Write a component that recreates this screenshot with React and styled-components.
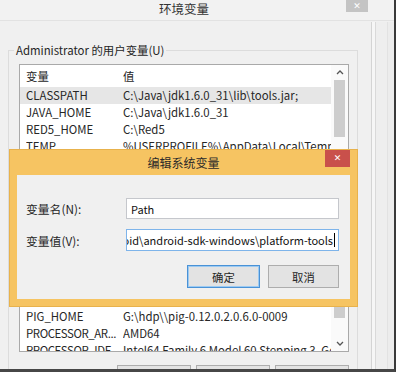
import React from 'react';
import styled, { createGlobalStyle } from 'styled-components';

const userVars = [
  { name: 'CLASSPATH', value: 'C:\\Java\\jdk1.6.0_31\\lib\\tools.jar;', selected: true },
  { name: 'JAVA_HOME', value: 'C:\\Java\\jdk1.6.0_31' },
  { name: 'RED5_HOME', value: 'C:\\Red5' },
  { name: 'TEMP', value: '%USERPROFILE%\\AppData\\Local\\Temp' },
  { name: 'TMP', value: '%USERPROFILE%\\AppData\\Local\\Temp' },
  { name: 'ComSpec', value: 'C:\\Windows\\system32\\cmd.exe' },
  { name: 'HADOOP_HOME', value: 'G:\\hdp\\hadoop-2.2.0.2.0.6.0-0009' },
  { name: 'HIVE_HOME', value: 'G:\\hdp\\hive-0.12.0.2.0.6.0-0009' },
  { name: 'NUMBER_OF_PR...', value: '4', cut: true },
  { name: 'OS', value: 'Windows_NT' },
  { name: 'Path', value: 'C:\\Windows\\system32;C:\\Windows' },
  { name: 'PATHEXT', value: '.COM;.EXE;.BAT;.CMD;.VBS;.VBE;.JS' },
  { name: 'PIG_CONF', value: 'G:\\hdp\\pig-0.12.0.2.0.6.0-0009\\conf' },
  { name: 'PIG_HOME', value: 'G:\\hdp\\\\pig-0.12.0.2.0.6.0-0009' },
  { name: 'PROCESSOR_AR...', value: 'AMD64', cut: true },
  { name: 'PROCESSOR_IDE...', value: 'Intel64 Family 6 Model 60 Stepping 3, GenuineIntel', cut: true },
];

const GlobalStyle = createGlobalStyle`
  html, body {
    margin: 0;
    padding: 0;
    background: #ffffff;
  }
  body {
    font-family: "Noto Sans CJK SC", "Noto Sans", sans-serif;
    font-size: 11.4px;
    color: #262626;
  }
  * {
    box-sizing: border-box;
  }
`;

const Screen = styled.div`
  width: 399px;
  height: 373px;
  overflow: hidden;
  background: #ffffff;
`;

const Window = styled.div`
  position: relative;
  width: 396px;
  height: 372px;
  display: flex;
  flex-direction: column;
  overflow: hidden;
  background: #f0f0f0;
  border-right: 2px solid #3a3a3a;
  border-bottom: 3px solid #474747;
`;

const TitleBar = styled.div`
  height: 21px;
  flex-shrink: 0;
  display: grid;
  grid-template-columns: 1fr auto 1fr;
  padding-right: 26px;
  background: #f2f2f2;
  border-bottom: 1px solid #e2e2e2;
`;

const TitleText = styled.div`
  grid-column: 2;
  font-size: 12.5px;
  line-height: 17px;
  color: #333333;
`;

const CloseButton = styled.div`
  grid-column: 3;
  justify-self: end;
  width: ${({ $w }) => $w}px;
  height: ${({ $h }) => $h}px;
  display: flex;
  align-items: center;
  justify-content: center;
  background: ${({ $color }) => $color};
  color: #ffffff;
  font-family: "DejaVu Sans", sans-serif;
  font-size: 9px;
  font-weight: bold;
  line-height: 1;
`;

const WindowBody = styled.div`
  flex: 1;
  display: flex;
  min-height: 0;
`;

const Client = styled.div`
  width: 371px;
  padding-left: 8px;
  overflow: hidden;
`;

const Frame = styled.div`
  flex: 1;
  margin-top: 1px;
  background:
    linear-gradient(to right,
      #d4d4d4 0, #d4d4d4 1px,
      #f6f6f6 1px, #f6f6f6 4px,
      #d9d9d9 4px, #d9d9d9 5px,
      #eeeeee 5px, #eeeeee 16px,
      #e2e2e2 16px, #e2e2e2 17px,
      #ececec 17px);
`;

const Group = styled.fieldset`
  margin: 21px 0 0 0;
  width: 350px;
  min-width: 0;
  padding: 6px 8px 0 10px;
  border: 1px solid #dcdcdc;
`;

const GroupLabel = styled.legend`
  margin-left: -5px;
  padding: 0 2px;
  line-height: 16px;
  color: #262626;
`;

const List = styled.div`
  width: 330px;
  height: 288px;
  display: flex;
  background: #ffffff;
  border: 1px solid #a9a9a9;
`;

const Rows = styled.div`
  flex: 1;
  min-width: 0;
  overflow: hidden;
`;

const RowBase = styled.div`
  display: grid;
  grid-template-columns: 97px 1fr;
  align-items: center;
  padding-left: 6px;
  white-space: nowrap;
`;

const HeaderRow = styled(RowBase)`
  height: 22px;
`;

const Row = styled(RowBase)`
  height: 17px;
  line-height: 17px;
  background: ${({ $selected }) => ($selected ? '#e6e6e6' : 'transparent')};
`;

const Cell = styled.div`
  overflow: hidden;
  white-space: nowrap;
  padding-right: 3px;
  letter-spacing: ${({ $cut }) => ($cut ? '-0.4px' : 'normal')};
`;

const Scrollbar = styled.div`
  width: 17px;
  display: flex;
  flex-direction: column;
  background: #fafafa;
`;

const ArrowBox = styled.div`
  height: 15px;
  flex-shrink: 0;
  display: flex;
  align-items: center;
  justify-content: center;
`;

const Thumb = styled.div`
  height: ${({ $h }) => $h}px;
  flex-shrink: 0;
  margin: 0 3px;
  background: #cdcdcd;
`;

const TrackGap = styled.div`
  flex: ${({ $fill }) => ($fill ? 1 : 'none')};
  height: ${({ $h }) => ($h ? `${$h}px` : 'auto')};
`;

const ActionRow = styled.div`
  display: flex;
  justify-content: flex-end;
  gap: 5px;
  margin-top: 13px;
`;

const Button = styled.div`
  width: ${({ $w }) => $w}px;
  height: 23px;
  display: flex;
  align-items: center;
  justify-content: center;
  background: #e3e3e3;
  border: 1px solid ${({ $primary }) => ($primary ? '#4a92d6' : '#adadad')};
  box-shadow: ${({ $primary }) => ($primary ? 'inset 0 0 0 1px #9ccaf2' : 'none')};
`;

const Dialog = styled.div`
  position: absolute;
  left: 10px;
  top: 150px;
  width: 347px;
  height: 156px;
  display: flex;
  flex-direction: column;
  padding: 0 7px 7px;
  background: #f6c462;
  box-shadow: 0 0 0 1px #e8b24c;
`;

const DialogTitle = styled.div`
  height: 25px;
  flex-shrink: 0;
  display: grid;
  grid-template-columns: 1fr auto 1fr;
  align-items: start;
`;

const DialogTitleText = styled.div`
  grid-column: 2;
  font-size: 12px;
  line-height: 26px;
  color: #2a2a2a;
`;

const DialogBody = styled.div`
  flex: 1;
  display: grid;
  grid-template-columns: 100px 1fr;
  grid-auto-rows: min-content;
  row-gap: 10px;
  align-items: center;
  padding: 23px 11px 11px 9px;
  background: #f0f0f0;
`;

const FieldLabel = styled.div`
  font-size: 11.8px;
`;

const Field = styled.div`
  height: ${({ $h }) => $h}px;
  display: flex;
  align-items: center;
  justify-content: ${({ $end }) => ($end ? 'flex-end' : 'flex-start')};
  padding: 0 3px 0 4px;
  overflow: hidden;
  white-space: nowrap;
  background: #ffffff;
  border: 1px solid ${({ $focused }) => ($focused ? '#7eb4ea' : '#c5c7cc')};
  font-size: 11px;
  color: #111111;
`;

const Caret = styled.span`
  flex-shrink: 0;
  width: 1px;
  height: 14px;
  margin-left: 1px;
  background: #000000;
`;

const DialogButtons = styled.div`
  grid-column: 1 / 3;
  display: flex;
  justify-content: flex-end;
  gap: 8px;
  margin-top: 4px;
`;

function Chevron({ down }) {
  return (
    <svg width="8" height="5" viewBox="0 0 8 5">
      <polyline
        points={down ? '1,1 4,4 7,1' : '1,4 4,1 7,4'}
        fill="none"
        stroke="#555555"
        strokeWidth="1.3"
      />
    </svg>
  );
}

export default function App() {
  return (
    <Screen>
      <GlobalStyle />
      <Window>
        <TitleBar>
          <TitleText>环境变量</TitleText>
          <CloseButton $w={22} $h={12} $color="#c4c4c4">✕</CloseButton>
        </TitleBar>
        <WindowBody>
          <Client>
            <Group>
              <GroupLabel>Administrator 的用户变量(U)</GroupLabel>
              <List>
                <Rows>
                  <HeaderRow>
                    <Cell>变量</Cell>
                    <Cell>值</Cell>
                  </HeaderRow>
                  {userVars.map((v) => (
                    <Row key={v.name} $selected={v.selected}>
                      <Cell $cut={v.cut}>{v.name}</Cell>
                      <Cell>{v.value}</Cell>
                    </Row>
                  ))}
                </Rows>
                <Scrollbar>
                  <ArrowBox>
                    <Chevron />
                  </ArrowBox>
                  <Thumb $h={57} />
                  <TrackGap $h={168} />
                  <Thumb $h={13} />
                  <TrackGap $fill />
                  <ArrowBox>
                    <Chevron down />
                  </ArrowBox>
                </Scrollbar>
              </List>
              <ActionRow>
                <Button $w={74}>新建(W)...</Button>
                <Button $w={74}>编辑(I)...</Button>
                <Button $w={74}>删除(L)</Button>
              </ActionRow>
            </Group>
          </Client>
          <Frame />
        </WindowBody>

        <Dialog>
          <DialogTitle>
            <DialogTitleText>编辑系统变量</DialogTitleText>
            <CloseButton $w={25} $h={17} $color="#c9504b">✕</CloseButton>
          </DialogTitle>
          <DialogBody>
            <FieldLabel>变量名(N):</FieldLabel>
            <Field $h={21}>Path</Field>
            <FieldLabel>变量值(V):</FieldLabel>
            <Field $h={22} $focused $end>
              <span>D:\android\android-sdk-windows\platform-tools</span>
              <Caret />
            </Field>
            <DialogButtons>
              <Button $w={73} $primary>确定</Button>
              <Button $w={71}>取消</Button>
            </DialogButtons>
          </DialogBody>
        </Dialog>
      </Window>
    </Screen>
  );
}
